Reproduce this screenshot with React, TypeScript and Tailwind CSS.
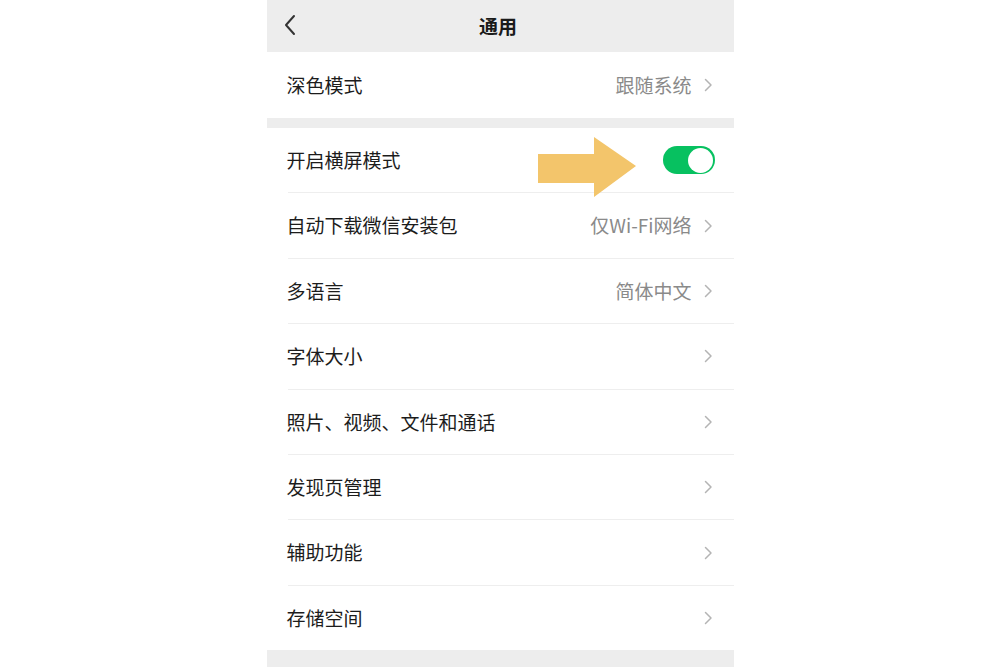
type Item = {
  label: string
  value?: string
  toggle?: boolean
}

const items: Item[] = [
  { label: "开启横屏模式", toggle: true },
  { label: "自动下载微信安装包", value: "仅Wi-Fi网络" },
  { label: "多语言", value: "简体中文" },
  { label: "字体大小" },
  { label: "照片、视频、文件和通话" },
  { label: "发现页管理" },
  { label: "辅助功能" },
  { label: "存储空间" },
]

function Arrow() {
  return (
    <svg width="9" height="14" viewBox="0 0 9 14" className="shrink-0">
      <path d="M1.5 1.5 L7 7 L1.5 12.5" fill="none" stroke="#b4b4b4" strokeWidth="1.5" strokeLinecap="round" strokeLinejoin="round" />
    </svg>
  )
}

function Toggle() {
  return (
    <div className="w-[52px] h-[28px] rounded-full bg-[#07c160] flex items-center justify-end p-[1.5px]">
      <div className="w-[25px] h-[25px] rounded-full bg-white" />
    </div>
  )
}

function Row({ item }: { item: Item }) {
  return (
    <div className="flex items-center justify-between pl-5 pr-[21px] h-[64.4px]">
      <span className="text-[19px] text-[#1c1c1c]">{item.label}</span>
      {item.toggle ? (
        <div className="mr-[-2px]">
          <Toggle />
        </div>
      ) : (
        <div className="flex items-center gap-[12px]">
          {item.value && <span className="text-[19px] text-[#8a8a8a]">{item.value}</span>}
          <Arrow />
        </div>
      )}
    </div>
  )
}

export default function App() {
  return (
    <div
      className="w-full h-[667px] bg-white flex justify-center overflow-hidden"
      style={{ fontFamily: '"Noto Sans CJK SC", "Noto Sans", sans-serif' }}
    >
      <div className="relative w-[467px] h-full bg-[#ededed] flex flex-col">
        <header className="relative h-[52px] flex items-center justify-center">
          <svg className="absolute left-[17px] top-[14px]" width="14" height="22" viewBox="0 0 14 22">
            <path d="M10 2 L2 11 L10 20" fill="none" stroke="#333" strokeWidth="2" strokeLinecap="round" strokeLinejoin="round" />
          </svg>
          <span className="text-[19px] font-semibold text-[#1a1a1a] mr-[4px]">通用</span>
        </header>

        <div className="bg-white">
          <div className="flex items-center justify-between pl-5 pr-[21px] h-[66px]">
            <span className="text-[19px] text-[#1c1c1c]">深色模式</span>
            <div className="flex items-center gap-[12px]">
              <span className="text-[19px] text-[#8a8a8a]">跟随系统</span>
              <Arrow />
            </div>
          </div>
        </div>

        <div className="h-[10px]" />

        <div className="bg-white">
          {items.map((item, i) => (
            <div key={item.label}>
              {i > 0 && <div className="h-px ml-[21px] bg-[#eeeeee]" />}
              <Row item={item} />
            </div>
          ))}
        </div>

        <svg
          className="absolute left-[271px] top-[137px]"
          width="98"
          height="60"
          viewBox="0 0 98 60"
        >
          <polygon points="0,17 56,17 56,0 98,29 56,60 56,46 0,46" fill="#f3c56b" />
        </svg>
      </div>
    </div>
  )
}
